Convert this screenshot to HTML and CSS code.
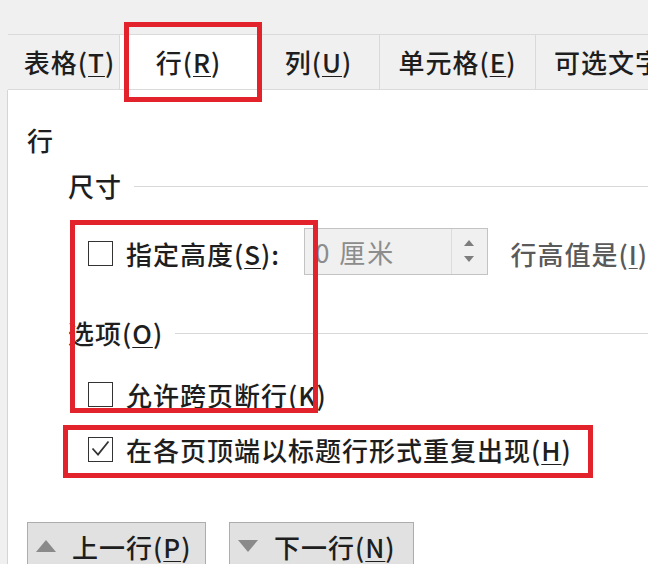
FILE: index.html
```html
<!DOCTYPE html>
<html lang="zh-CN">
<head>
<meta charset="utf-8">
<title>表格属性</title>
<link rel="stylesheet" href="styles.css">
</head>
<body>
<div class="dialog">
  <div class="tabs">
    <div class="tab tab-table">表格(<u>T</u>)</div>
    <div class="tab tab-row active">行(<u>R</u>)</div>
    <div class="tab tab-col">列(<u>U</u>)</div>
    <div class="tab tab-cell">单元格(<u>E</u>)</div>
    <div class="tab tab-alt">可选文字</div>
  </div>
  <div class="panel">
    <div class="section-title">行</div>
    <div class="group-head group-size"><span>尺寸</span><i class="rule"></i></div>
    <div class="row row-height">
      <label class="check"><span class="box"></span><span>指定高度(<u>S</u>):</span></label>
      <div class="spin">
        <span class="spin-value">0 厘米</span>
        <span class="spin-btns">
          <svg class="arr" viewBox="0 0 10 6" width="10" height="6"><path d="M0 6 L5 0 L10 6 Z" fill="#7d7d7d"/></svg>
          <svg class="arr" viewBox="0 0 10 6" width="10" height="6"><path d="M0 0 L5 6 L10 0 Z" fill="#7d7d7d"/></svg>
        </span>
      </div>
      <span class="muted">行高值是(<u>I</u>)</span>
    </div>
    <div class="group-head group-opt"><span>选项(<u>O</u>)</span><i class="rule"></i></div>
    <div class="row row-break">
      <label class="check"><span class="box"></span><span>允许跨页断行(<u>K</u>)</span></label>
    </div>
    <div class="row row-repeat">
      <label class="check"><span class="box checked"><svg viewBox="0 0 25 25" width="25" height="25"><path d="M4.5 12.5 L10 18.5 L20.5 5.5" fill="none" stroke="#333" stroke-width="1.8"/></svg></span><span>在各页顶端以标题行形式重复出现(<u>H</u>)</span></label>
    </div>
    <div class="buttons">
      <div class="btn btn-prev"><svg viewBox="0 0 20 12" width="20" height="12"><path d="M0 12 L10 0 L20 12 Z" fill="#8a8a8a"/></svg><span>上一行(<u>P</u>)</span></div>
      <div class="btn btn-next"><svg viewBox="0 0 20 12" width="20" height="12"><path d="M0 0 L10 12 L20 0 Z" fill="#8a8a8a"/></svg><span>下一行(<u>N</u>)</span></div>
    </div>
  </div>
  <div class="mark mark-tab"></div>
  <div class="mark mark-height"></div>
  <div class="mark mark-repeat"></div>
</div>
</body>
</html>
```
FILE: styles.css
```css
html, body {
  margin: 0;
  padding: 0;
}
body {
  width: 648px;
  height: 564px;
  overflow: hidden;
  background: #f0f0f0;
  font-family: "Noto Sans CJK SC", "Microsoft YaHei", sans-serif;
  font-size: 26px;
  font-weight: 500;
  letter-spacing: 1px;
  color: #1e1e1e;
}
u {
  text-decoration: underline;
  text-decoration-thickness: 1px;
  text-underline-offset: 3px;
}
.dialog {
  position: relative;
  width: 648px;
  height: 564px;
  padding-top: 34px;
  box-sizing: border-box;
  overflow: hidden;
}
.tabs {
  display: flex;
  height: 56px;
  margin-left: 8px;
  border-top: 1px solid #dadada;
  border-bottom: 1px solid #dadada;
  box-sizing: border-box;
  white-space: nowrap;
  overflow: hidden;
}
.tab {
  display: flex;
  align-items: center;
  justify-content: center;
  background: #f0f0f0;
  border-right: 1px solid #d9d9d9;
  box-sizing: border-box;
  line-height: 1;
  flex: none;
}
.tab-table { width: 112px; padding-left: 12px; }
.tab-row { width: 138px; }
.tab-col { width: 122px; }
.tab-cell { width: 156px; }
.tab-alt { width: 112px; justify-content: flex-start; padding-left: 18px; border-right: none; }
.tab.active {
  background: #ffffff;
  margin-bottom: -1px;
  padding-bottom: 1px;
}
.panel {
  margin-left: 7px;
  height: 474px;
  background: #ffffff;
  border-left: 1px solid #d5d5d5;
  padding-left: 19px;
  padding-top: 32px;
  box-sizing: border-box;
}
.section-title {
  line-height: 36px;
  height: 36px;
}
.group-head {
  display: flex;
  align-items: center;
  height: 36px;
  line-height: 36px;
  margin-left: 41px;
}
.group-size { margin-top: 10px; }
.group-opt { margin-top: 38px; }
.group-head .rule {
  flex: 1;
  height: 0;
  border-top: 1px solid #d8d8d8;
  margin-left: 12px;
  margin-right: -40px;
}
.row {
  display: flex;
  align-items: center;
  margin-left: 61px;
  white-space: nowrap;
}
.row-height { height: 48px; margin-top: 25px; }
.row-break { height: 36px; margin-top: 25px; }
.row-repeat { height: 36px; margin-top: 19px; }
.check {
  display: flex;
  align-items: center;
}
.box {
  width: 25px;
  height: 25px;
  border: 1.5px solid #333333;
  box-sizing: border-box;
  margin-right: 13px;
  background: #fff;
  position: relative;
  flex: none;
}
.box svg {
  position: absolute;
  left: -1.5px;
  top: -1.5px;
}
.spin {
  display: flex;
  align-items: stretch;
  width: 187px;
  height: 47px;
  margin-left: 24px;
  margin-top: -4px;
  border: 1px solid #c3c3c3;
  background: #f0f0f0;
  box-sizing: border-box;
  color: #8c8c8c;
  font-weight: 400;
}
.spin-value {
  flex: 1;
  display: flex;
  align-items: center;
  padding-left: 10px;
  letter-spacing: 2px;
}
.spin-btns {
  width: 34px;
  border-left: 1px solid #dcdcdc;
  display: flex;
  flex-direction: column;
  align-items: center;
  justify-content: space-around;
  padding: 6px 0;
  box-sizing: border-box;
  margin-right: 2px;
}
.muted {
  color: #5a5a5a;
  margin-left: 22px;
}
.buttons {
  display: flex;
  gap: 23px;
  margin-top: 55px;
}
.btn {
  display: flex;
  align-items: center;
  height: 48px;
  background: #e1e1e1;
  border: 1px solid #adadad;
  box-sizing: border-box;
  padding-left: 8px;
  white-space: nowrap;
}
.btn svg { margin-right: 16px; }
.btn-prev { width: 179px; }
.btn-next { width: 185px; }
.mark {
  position: absolute;
  border: 5px solid #e3232c;
  box-sizing: border-box;
}
.mark-tab { left: 124px; top: 22px; width: 138px; height: 80px; }
.mark-height { left: 70px; top: 220px; width: 248px; height: 193px; }
.mark-repeat { left: 63px; top: 425px; width: 530px; height: 53px; }
```
